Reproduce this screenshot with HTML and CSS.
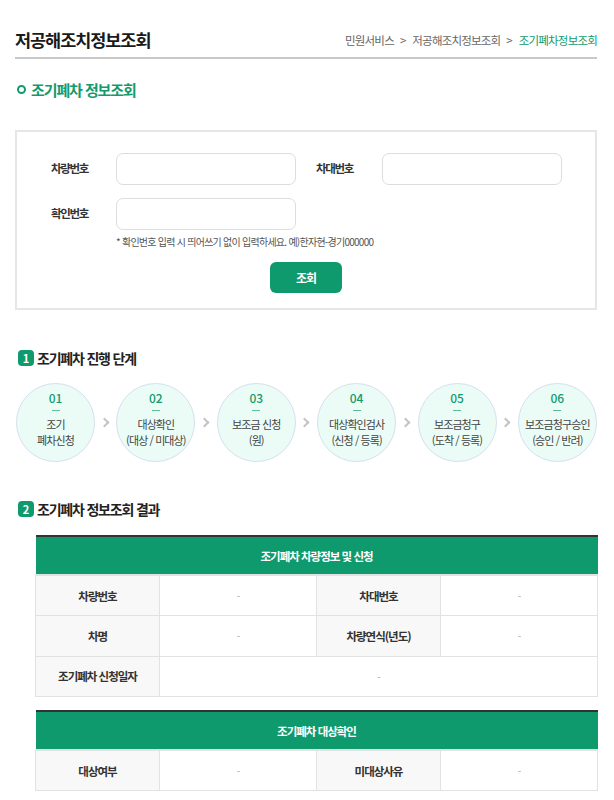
FILE: index.html
```html
<!DOCTYPE html>
<html lang="ko">
<head>
<meta charset="utf-8">
<title>조기폐차정보조회</title>
<link rel="stylesheet" href="styles.css">
</head>
<body>
<div class="page">
  <header class="top">
    <h1 class="title">저공해조치정보조회</h1>
    <nav class="crumb">
      <span>민원서비스</span><span class="sep">&gt;</span><span>저공해조치정보조회</span><span class="sep">&gt;</span><span class="cur">조기폐차정보조회</span>
    </nav>
  </header>

  <h2 class="subtitle"><span class="ring"></span>조기폐차 정보조회</h2>

  <form class="search">
    <div class="grid">
      <label class="lbl">차량번호</label>
      <input class="inp" type="text">
      <label class="lbl lbl2">차대번호</label>
      <input class="inp" type="text">
      <label class="lbl">확인번호</label>
      <input class="inp" type="text">
    </div>
    <p class="hint">* 확인번호 입력 시 띄어쓰기 없이 입력하세요. 예)한자현-경기000000</p>
    <div class="btnrow"><button type="button" class="btn">조회</button></div>
  </form>

  <h3 class="sec"><span class="badge">1</span>조기폐차 진행 단계</h3>
  <div class="steps">
    <div class="step"><span class="num">01</span><span class="dash"></span><span class="txt">조기<br>폐차신청</span></div>
    <span class="chev"></span>
    <div class="step"><span class="num">02</span><span class="dash"></span><span class="txt">대상확인<br>(대상 / 미대상)</span></div>
    <span class="chev"></span>
    <div class="step"><span class="num">03</span><span class="dash"></span><span class="txt">보조금 신청<br>(원)</span></div>
    <span class="chev"></span>
    <div class="step"><span class="num">04</span><span class="dash"></span><span class="txt">대상확인검사<br>(신청 / 등록)</span></div>
    <span class="chev"></span>
    <div class="step"><span class="num">05</span><span class="dash"></span><span class="txt">보조금청구<br>(도착 / 등록)</span></div>
    <span class="chev"></span>
    <div class="step"><span class="num">06</span><span class="dash"></span><span class="txt">보조금청구승인<br>(승인 / 반려)</span></div>
  </div>

  <h3 class="sec sec2"><span class="badge">2</span>조기폐차 정보조회 결과</h3>

  <table class="tbl">
    <colgroup><col class="c1"><col class="c2"><col class="c1"><col class="c2"></colgroup>
    <thead><tr><th colspan="4" class="head">조기폐차 차량정보 및 신청</th></tr></thead>
    <tbody>
      <tr><th>차량번호</th><td>-</td><th>차대번호</th><td>-</td></tr>
      <tr><th>차명</th><td>-</td><th>차량연식(년도)</th><td>-</td></tr>
      <tr><th>조기폐차 신청일자</th><td colspan="3">-</td></tr>
    </tbody>
  </table>

  <table class="tbl tbl2">
    <colgroup><col class="c1"><col class="c2"><col class="c1"><col class="c2"></colgroup>
    <thead><tr><th colspan="4" class="head">조기폐차 대상확인</th></tr></thead>
    <tbody>
      <tr><th>대상여부</th><td>-</td><th>미대상사유</th><td>-</td></tr>
    </tbody>
  </table>
</div>
</body>
</html>
```

FILE: styles.css
```css
* { box-sizing: border-box; }
body {
  margin: 0;
  font-family: "Noto Sans CJK KR", "Noto Sans", sans-serif;
  color: #222;
  background: #fff;
}
.page { padding: 0 17px 0 15px; }

.top {
  display: flex;
  justify-content: space-between;
  align-items: center;
  padding-top: 28px;
  padding-bottom: 5px;
  border-bottom: 2px solid #c8c8c8;
}
.title {
  margin: 0;
  font-size: 17.5px;
  line-height: 24px;
  font-weight: 700;
  color: #1a1a1a;
  letter-spacing: -1.05px;
}
.crumb {
  font-size: 11.5px;
  color: #666;
  letter-spacing: -0.8px;
}
.crumb .sep { margin: 0 6px; letter-spacing: 0; }
.crumb .cur { color: #119b6e; }

.subtitle {
  display: flex;
  align-items: center;
  margin: 19px 0 0 0;
  height: 22px;
  font-size: 15px;
  font-weight: 700;
  color: #119b6e;
  letter-spacing: -1.1px;
}
.ring {
  width: 9px; height: 9px;
  border: 2px solid #119b6e;
  border-radius: 50%;
  margin: 0 5px 0 2px;
}

.search {
  margin: 30px 0 0 0;
  border: 2px solid #e6e6e6;
  padding: 21px 0 15px 34px;
}
.grid {
  display: grid;
  grid-template-columns: 65px 180px 86px 180px;
  row-gap: 13px;
  align-items: center;
}
.lbl { font-size: 11.5px; font-weight: 700; color: #333; letter-spacing: -1.3px; margin-top: -3px; }
.lbl2 { padding-left: 20px; }
.inp {
  height: 32px;
  border: 1px solid #ddd;
  border-radius: 7px;
  background: #fff;
  margin: 0;
}
.hint {
  margin: 5px 0 0 65px;
  font-size: 10px;
  line-height: 14px;
  color: #555;
  letter-spacing: -0.75px;
}
.btnrow { display: flex; justify-content: center; margin: 13px 0 0 -34px; }
.btn {
  width: 72px; height: 31px;
  background: #0e9a6d;
  border: none;
  border-radius: 6px;
  color: #fff;
  font-family: inherit;
  font-size: 12px;
  font-weight: 700;
  letter-spacing: -1px;
}

.sec {
  display: flex;
  align-items: center;
  margin: 38px 0 0 3px;
  height: 20px;
  font-size: 14px;
  font-weight: 700;
  color: #222;
  letter-spacing: -1.2px;
}
.badge {
  display: inline-flex;
  align-items: center;
  justify-content: center;
  width: 16px; height: 16px;
  border-radius: 4px;
  background: #0e9a6d;
  color: #fff;
  font-size: 11px;
  font-weight: 700;
  margin-right: 3px;
  letter-spacing: 0;
}
.sec2 { margin-top: 37px; }

.steps {
  display: flex;
  justify-content: space-between;
  align-items: center;
  margin-top: 15px;
  padding-left: 1px;
}
.step {
  width: 79px; height: 79px;
  border-radius: 50%;
  background: #ebfcf6;
  border: 1px solid #d3e0ee;
  display: flex;
  flex-direction: column;
  align-items: center;
  padding-top: 6px;
}
.num { font-size: 12px; line-height: 16px; color: #119b6e; font-weight: 500; }
.dash { width: 8px; height: 1px; background: #5cbf9c; margin: 4px 0 5px; }
.txt { font-size: 11px; line-height: 16px; color: #444; text-align: center; letter-spacing: -0.9px; white-space: nowrap; }
.chev {
  width: 7px; height: 7px;
  border-top: 2px solid #c4c4c4;
  border-right: 2px solid #c4c4c4;
  transform: rotate(45deg);
  margin-left: -3px;
}

.tbl {
  width: 562px;
  margin: 16px 0 0 20px;
  border-collapse: collapse;
  table-layout: fixed;
  font-size: 11.5px;
  letter-spacing: -1px;
  border-top: 2px solid #333;
}
.tbl2 { margin-top: 13px; }
.c1 { width: 124px; }
.c2 { width: 157px; }
.tbl th, .tbl td {
  height: 40.5px;
  border: 1px solid #e2e2e2;
  text-align: center;
  padding: 0;
}
.tbl th { background: #f8f8f8; font-weight: 700; color: #333; }
.tbl td { color: #aaa; font-size: 10px; background: #fff; }
.tbl .head {
  height: 39px;
  background: #0e9a6d;
  color: #fff;
  font-weight: 700;
  border: none;
  border-bottom: 2px solid #e2e2e2;
}
```
